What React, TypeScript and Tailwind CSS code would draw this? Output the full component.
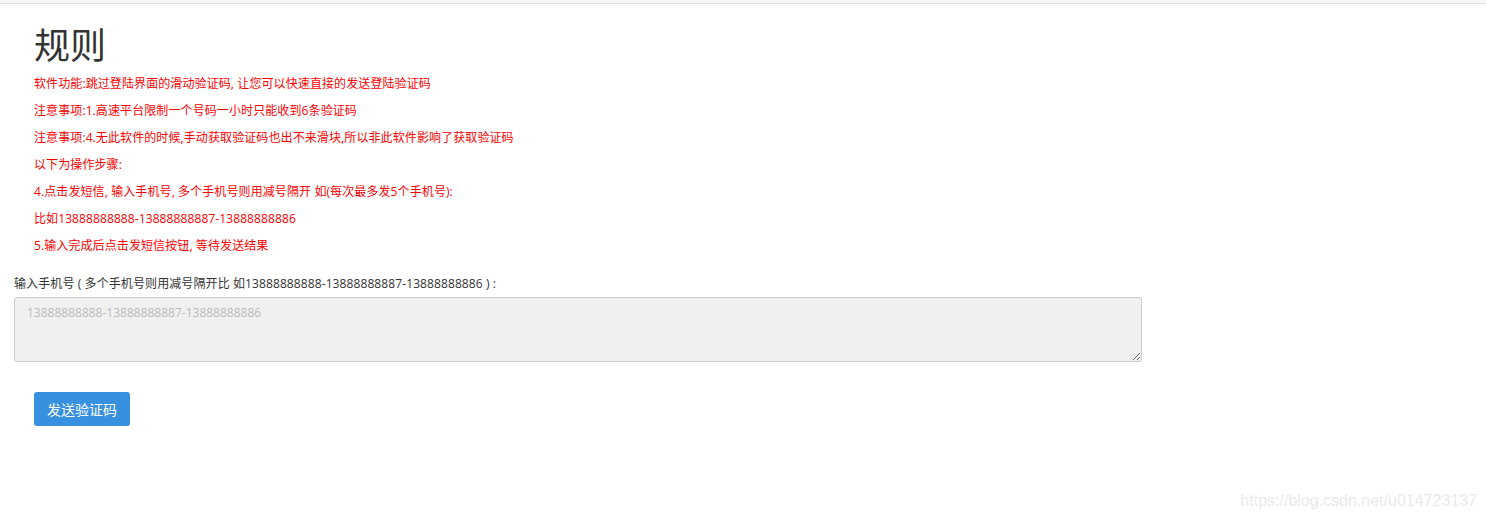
import React from 'react';

const rules = [
  '软件功能:跳过登陆界面的滑动验证码, 让您可以快速直接的发送登陆验证码',
  '注意事项:1.高速平台限制一个号码一小时只能收到6条验证码',
  '注意事项:4.无此软件的时候,手动获取验证码也出不来滑块,所以非此软件影响了获取验证码',
  '以下为操作步骤:',
  '4.点击发短信, 输入手机号, 多个手机号则用减号隔开 如(每次最多发5个手机号):',
  '比如13888888888-13888888887-13888888886',
  '5.输入完成后点击发短信按钮, 等待发送结果',
];

export default function App() {
  return (
    <div
      className="relative min-h-[521px] w-full bg-white text-[#333]"
      style={{ fontFamily: '"Open Sans", "Noto Sans CJK SC", sans-serif' }}
    >
      <div className="h-[4px] bg-[#f7f7f7] border-b border-[#e3e3e3]" />
      <div className="px-[34px] pt-[18px]">
        <h1 className="text-[36px] leading-[48px] text-[#333] font-normal">规则</h1>
        <div className="flex flex-col">
          {rules.map((r, i) => (
            <p key={i} className="text-[12px] leading-[27px] text-[#ff0000] tracking-[0.1px]">
              {r}
            </p>
          ))}
        </div>
      </div>
      <div className="px-[14px] pt-[16px]">
        <label className="block text-[12px] leading-[18px] text-[#333] tracking-[0.1px]">
          输入手机号 ( 多个手机号则用减号隔开比 如13888888888-13888888887-13888888886 ) :
        </label>
        <textarea
          className="mt-[4px] block h-[65px] w-[1128px] rounded-[3px] border border-[#ccc] bg-[#f0f0f0] px-[12px] py-[6px] text-[12px] leading-[18px] text-[#555] placeholder:text-[#bbb] outline-none"
          placeholder="13888888888-13888888887-13888888886"
        />
      </div>
      <div className="px-[34px] pt-[30px]">
        <button className="h-[34px] w-[96px] rounded-[3px] bg-[#3790e0] text-[14px] text-white">
          发送验证码
        </button>
      </div>
      <div
        className="absolute right-[9px] bottom-[8px] text-[16px] text-[#eaeaea]"
        style={{ fontFamily: '"Liberation Sans", Arial, sans-serif' }}
      >
        https://blog.csdn.net/u014723137
      </div>
    </div>
  );
}
